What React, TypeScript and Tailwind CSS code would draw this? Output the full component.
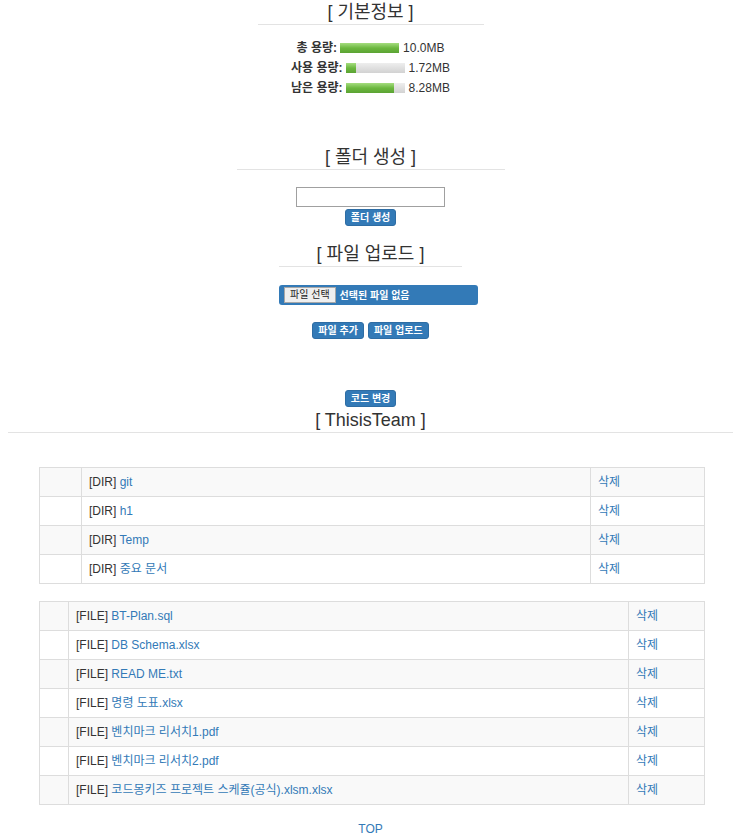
const dirs = ['git', 'h1', 'Temp', '중요 문서'];
const files = [
  'BT-Plan.sql',
  'DB Schema.xlsx',
  'READ ME.txt',
  '명령 도표.xlsx',
  '벤치마크 리서치1.pdf',
  '벤치마크 리서치2.pdf',
  '코드몽키즈 프로젝트 스케쥴(공식).xlsm.xlsx',
];

function Btn({ children }: { children: React.ReactNode }) {
  return (
    <button className="h-[17px] rounded-[3px] border border-[#2e6da4] bg-[#337ab7] px-[5px] text-[10px] font-bold leading-[15px] text-white">
      {children}
    </button>
  );
}

function Heading({ children, width }: { children: React.ReactNode; width: string }) {
  return (
    <div className={`mx-auto border-b border-[#e3e3e3] text-center text-[18px] leading-[24px] text-[#333] ${width}`}>
      {children}
    </div>
  );
}

function Usage({ label, value, pct }: { label: string; value: string; pct: number }) {
  return (
    <div className="flex h-[20px] items-center justify-center">
      <span className="font-bold">{label}</span>
      <div className="ml-[3px] h-[10px] w-[59px] bg-linear-to-b from-[#eeeeee] to-[#d2d2d2]">
        <div
          className="h-full bg-linear-to-b from-[#a5dd7e] via-[#6cb83f] to-[#5ba333]"
          style={{ width: pct + '%' }}
        />
      </div>
      <span className="ml-[4px]">{value}</span>
    </div>
  );
}

function ListTable({ kind, items, first, last }: { kind: string; items: string[]; first: string; last: string }) {
  return (
    <table className="ml-[31px] w-[666px] table-fixed border-collapse border border-[#ddd]">
      <colgroup>
        <col className={first} />
        <col />
        <col className={last} />
      </colgroup>
      <tbody>
        {items.map((name, i) => (
          <tr key={name} className={i % 2 === 0 ? 'bg-[#f9f9f9]' : 'bg-white'}>
            <td className="h-[29px] border border-[#ddd] p-0" />
            <td className="h-[29px] border border-[#ddd] px-[7px] py-0 leading-[12px]">
              [{kind}] <a className="text-[#337ab7]">{name}</a>
            </td>
            <td className="h-[29px] border border-[#ddd] px-[7px] py-0 leading-[12px]">
              <a className="text-[#337ab7]">삭제</a>
            </td>
          </tr>
        ))}
      </tbody>
    </table>
  );
}

export default function App() {
  return (
    <div className="h-[836px] w-[749px] overflow-hidden bg-white font-['Liberation_Sans','Noto_Sans_CJK_KR',sans-serif] text-[12px] text-[#333]">
      <div className="ml-2 w-[725px]">
        <Heading width="w-[226px]">[ 기본정보 ]</Heading>
        <div className="mt-[13px]">
          <Usage label="총 용량:" value="10.0MB" pct={100} />
          <Usage label="사용 용량:" value="1.72MB" pct={17.2} />
          <Usage label="남은 용량:" value="8.28MB" pct={82.8} />
        </div>

        <div className="mt-[47px]">
          <Heading width="w-[268px]">[ 폴더 생성 ]</Heading>
        </div>
        <div className="mt-[17px] flex flex-col items-center">
          <input className="h-[20px] w-[149px] border border-[#a0a0a0] bg-white" />
          <div className="mt-px">
            <Btn>폴더 생성</Btn>
          </div>
        </div>

        <div className="mt-[16px]">
          <Heading width="w-[183px]">[ 파일 업로드 ]</Heading>
        </div>
        <div className="mx-auto mt-[18px] w-[183px]">
          <div className="flex h-[20px] w-[199px] items-center rounded-[3px] bg-[#337ab7] pl-[5px]">
            <span className="h-[16px] border border-[#a8a8a8] bg-[#efefef] px-[5px] text-[10px] leading-[14px] text-[#222]">
              파일 선택
            </span>
            <span className="ml-[4px] text-[10px] font-bold text-white">선택된 파일 없음</span>
          </div>
        </div>
        <div className="mt-[17px] flex justify-center gap-[4px]">
          <Btn>파일 추가</Btn>
          <Btn>파일 업로드</Btn>
        </div>

        <div className="mt-[51px] flex justify-center">
          <Btn>코드 변경</Btn>
        </div>
        <div className="mt-px">
          <Heading width="w-[725px]">[ ThisisTeam ]</Heading>
        </div>

        <div className="mt-[34px]">
          <ListTable kind="DIR" items={dirs} first="w-[42px]" last="w-[114px]" />
        </div>
        <div className="mt-[17px]">
          <ListTable kind="FILE" items={files} first="w-[29px]" last="w-[76px]" />
        </div>

        <div className="mt-[17px] text-center leading-[14px]">
          <a className="text-[#337ab7]">TOP</a>
        </div>
      </div>
    </div>
  );
}
